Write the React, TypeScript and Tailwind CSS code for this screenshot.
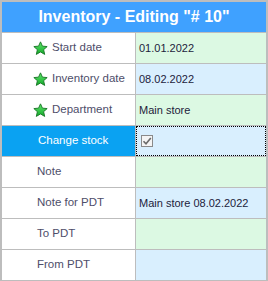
const Star = () => (
  <svg width="15" height="15" viewBox="0 0 14 14" className="shrink-0">
    <defs>
      <linearGradient id="sg" x1="0" y1="0" x2="0" y2="1">
        <stop offset="0" stopColor="#5fe86a" />
        <stop offset="1" stopColor="#12a82a" />
      </linearGradient>
    </defs>
    <path
      d="M7 0.8 L8.8 4.8 L13.2 5.2 L9.9 8.1 L10.9 12.5 L7 10.2 L3.1 12.5 L4.1 8.1 L0.8 5.2 L5.2 4.8 Z"
      fill="url(#sg)"
      stroke="#1c7a2a"
      strokeWidth="0.9"
      strokeLinejoin="round"
    />
  </svg>
);

type Row = {
  label: string;
  value?: string;
  star?: boolean;
  bg: string;
  selected?: boolean;
  check?: boolean;
};

const rows: Row[] = [
  { label: "Start date", value: "01.01.2022", star: true, bg: "bg-[#dcf9e3]" },
  { label: "Inventory date", value: "08.02.2022", star: true, bg: "bg-[#d9effe]" },
  { label: "Department", value: "Main store", star: true, bg: "bg-[#dcf9e3]" },
  { label: "Change stock", bg: "bg-[#d9effe]", selected: true, check: true },
  { label: "Note", bg: "bg-[#dcf9e3]" },
  { label: "Note for PDT", value: "Main store 08.02.2022", bg: "bg-[#d9effe]" },
  { label: "To PDT", bg: "bg-[#dcf9e3]" },
  { label: "From PDT", bg: "bg-[#d9effe]" },
];

export default function App() {
  return (
    <div
      className="w-[268px] h-[281px] bg-[#bdbdbd] pl-[2px] pr-[2px] pt-[2px] pb-[1px] flex flex-col whitespace-nowrap"
      style={{ fontFamily: "'Liberation Sans', Arial, sans-serif" }}
    >
      <div className="h-[30px] bg-[#3fa1ff] text-white font-bold text-[16px] flex items-center justify-center">
        Inventory - Editing "# 10"
      </div>
      {rows.map((r) => (
        <div key={r.label} className="h-[31px] pt-[1px] flex gap-[1px]">
          <div
            className={
              "w-[133px] flex items-center gap-[4px] text-[11.5px] " +
              (r.selected
                ? "bg-[#0aa2f2] text-white pl-[36px]"
                : r.star
                ? "bg-white text-[#4e4e6a] pl-[31px]"
                : "bg-white text-[#4e4e6a] pl-[35px]")
            }
          >
            {r.star && <Star />}
            <span>{r.label}</span>
          </div>
          <div
            className={
              "flex-1 flex items-center pl-[3px] text-[11px] text-[#1c1c3c] " +
              r.bg +
              (r.selected ? " border border-dotted border-black pl-[2px]" : "")
            }
          >
            {r.check && (
              <div className="w-[12px] h-[12px] ml-[1px] border border-[#8a8a8a] bg-[#f4f4f4] flex items-center justify-center">
                <svg width="10" height="10" viewBox="0 0 10 10">
                  <path d="M1.5 5.2 L4 7.8 L8.8 2" fill="none" stroke="#6a6a6a" strokeWidth="1.6" />
                </svg>
              </div>
            )}
            {r.value}
          </div>
        </div>
      ))}
    </div>
  );
}
